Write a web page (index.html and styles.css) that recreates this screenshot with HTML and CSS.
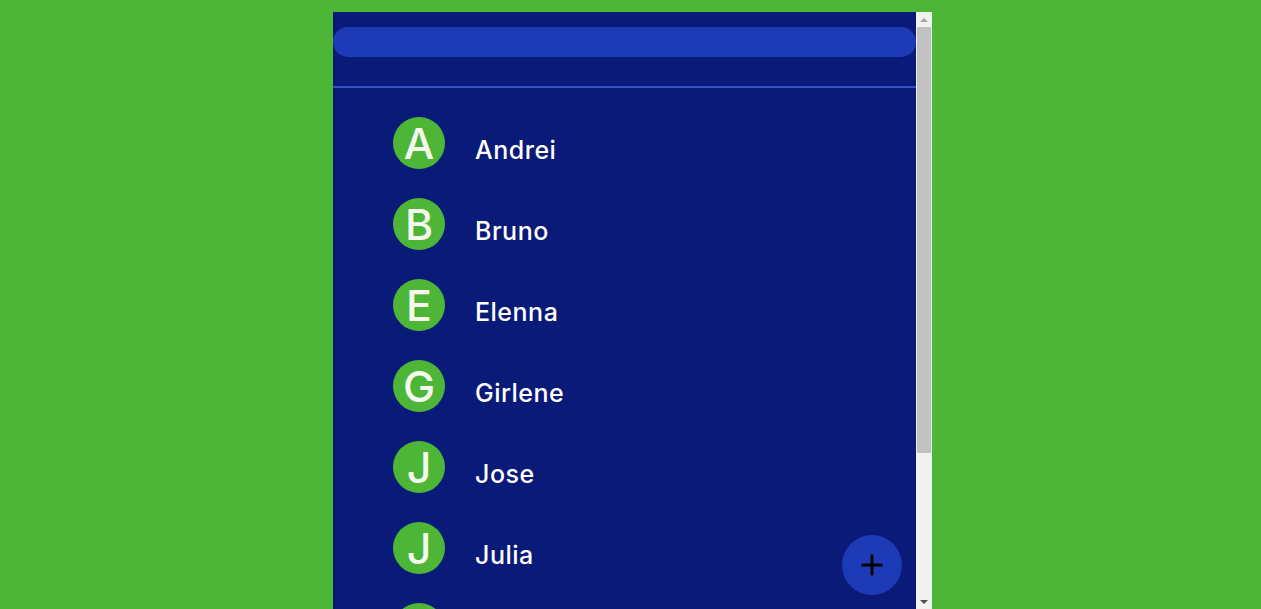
FILE: index.html
```html
<!DOCTYPE html>
<html>
<head>
<meta charset="utf-8">
<link rel="stylesheet" href="styles.css">
</head>
<body>
<div class="app">
  <div class="content">
    <header class="header">
      <div class="search"></div>
    </header>
    <ul class="list">
      <li class="contact"><span class="avatar">A</span><span class="name">Andrei</span></li>
      <li class="contact"><span class="avatar">B</span><span class="name">Bruno</span></li>
      <li class="contact"><span class="avatar">E</span><span class="name">Elenna</span></li>
      <li class="contact"><span class="avatar">G</span><span class="name">Girlene</span></li>
      <li class="contact"><span class="avatar">J</span><span class="name">Jose</span></li>
      <li class="contact"><span class="avatar">J</span><span class="name">Julia</span></li>
      <li class="contact"><span class="avatar">M</span><span class="name">Marcos</span></li>
    </ul>
  </div>
  <div class="scrollbar">
    <div class="sb-btn"><span class="arrow-up"></span></div>
    <div class="sb-track"><div class="sb-thumb"></div></div>
    <div class="sb-btn"><span class="arrow-down"></span></div>
  </div>
  <button class="fab" aria-label="Adicionar">
    <svg width="24" height="24" viewBox="0 0 24 24"><path d="M12 1.5v21M1.5 12h21" stroke="#000" stroke-width="2.8" fill="none"/></svg>
  </button>
</div>
</body>
</html>
```
FILE: styles.css
```css
html, body {
  margin: 0;
  padding: 0;
  height: 100%;
  overflow: hidden;
}
body {
  background: #4db637;
  font-family: "Inter", "Noto Sans", sans-serif;
}
.app {
  position: relative;
  display: flex;
  width: 599px;
  height: 597px;
  margin: 12px 0 0 333px;
  background: #0a1a79;
}
.content {
  flex: 1;
  min-width: 0;
  overflow: hidden;
}
.header {
  padding-top: 15px;
  height: 59px;
  border-bottom: 2px solid #3550c6;
}
.search {
  height: 30px;
  border-radius: 15px;
  background: #1d3ab7;
}
.list {
  list-style: none;
  margin: 0;
  padding: 29px 0 0 60px;
}
.contact {
  display: flex;
  height: 81px;
}
.avatar {
  flex: none;
  width: 52px;
  height: 52px;
  border-radius: 50%;
  background: #4db637;
  color: #f4f8ee;
  font-size: 43px;
  font-weight: 500;
  line-height: 52px;
  text-align: center;
}
.name {
  margin-left: 30px;
  color: #fff;
  font-size: 25px;
  font-weight: 500;
  letter-spacing: 0.5px;
  margin-top: 18px;
}
.scrollbar {
  flex: none;
  width: 16px;
  display: flex;
  flex-direction: column;
  background: #f1f1f1;
}
.sb-btn {
  height: 15px;
  display: flex;
  align-items: center;
  justify-content: center;
}
.arrow-up {
  width: 0;
  height: 0;
  border-left: 4px solid transparent;
  border-right: 4px solid transparent;
  border-bottom: 4px solid #a3a3a3;
}
.arrow-down {
  width: 0;
  height: 0;
  border-left: 4px solid transparent;
  border-right: 4px solid transparent;
  border-top: 4px solid #505050;
}
.sb-track {
  flex: 1;
  padding: 0 1px;
}
.sb-thumb {
  height: 426px;
  background: #c1c1c1;
}
.fab {
  position: absolute;
  left: 509px;
  top: 523px;
  width: 60px;
  height: 60px;
  border-radius: 50%;
  border: none;
  background: #1d3ab7;
  display: flex;
  align-items: center;
  justify-content: center;
  padding: 0;
}
```
